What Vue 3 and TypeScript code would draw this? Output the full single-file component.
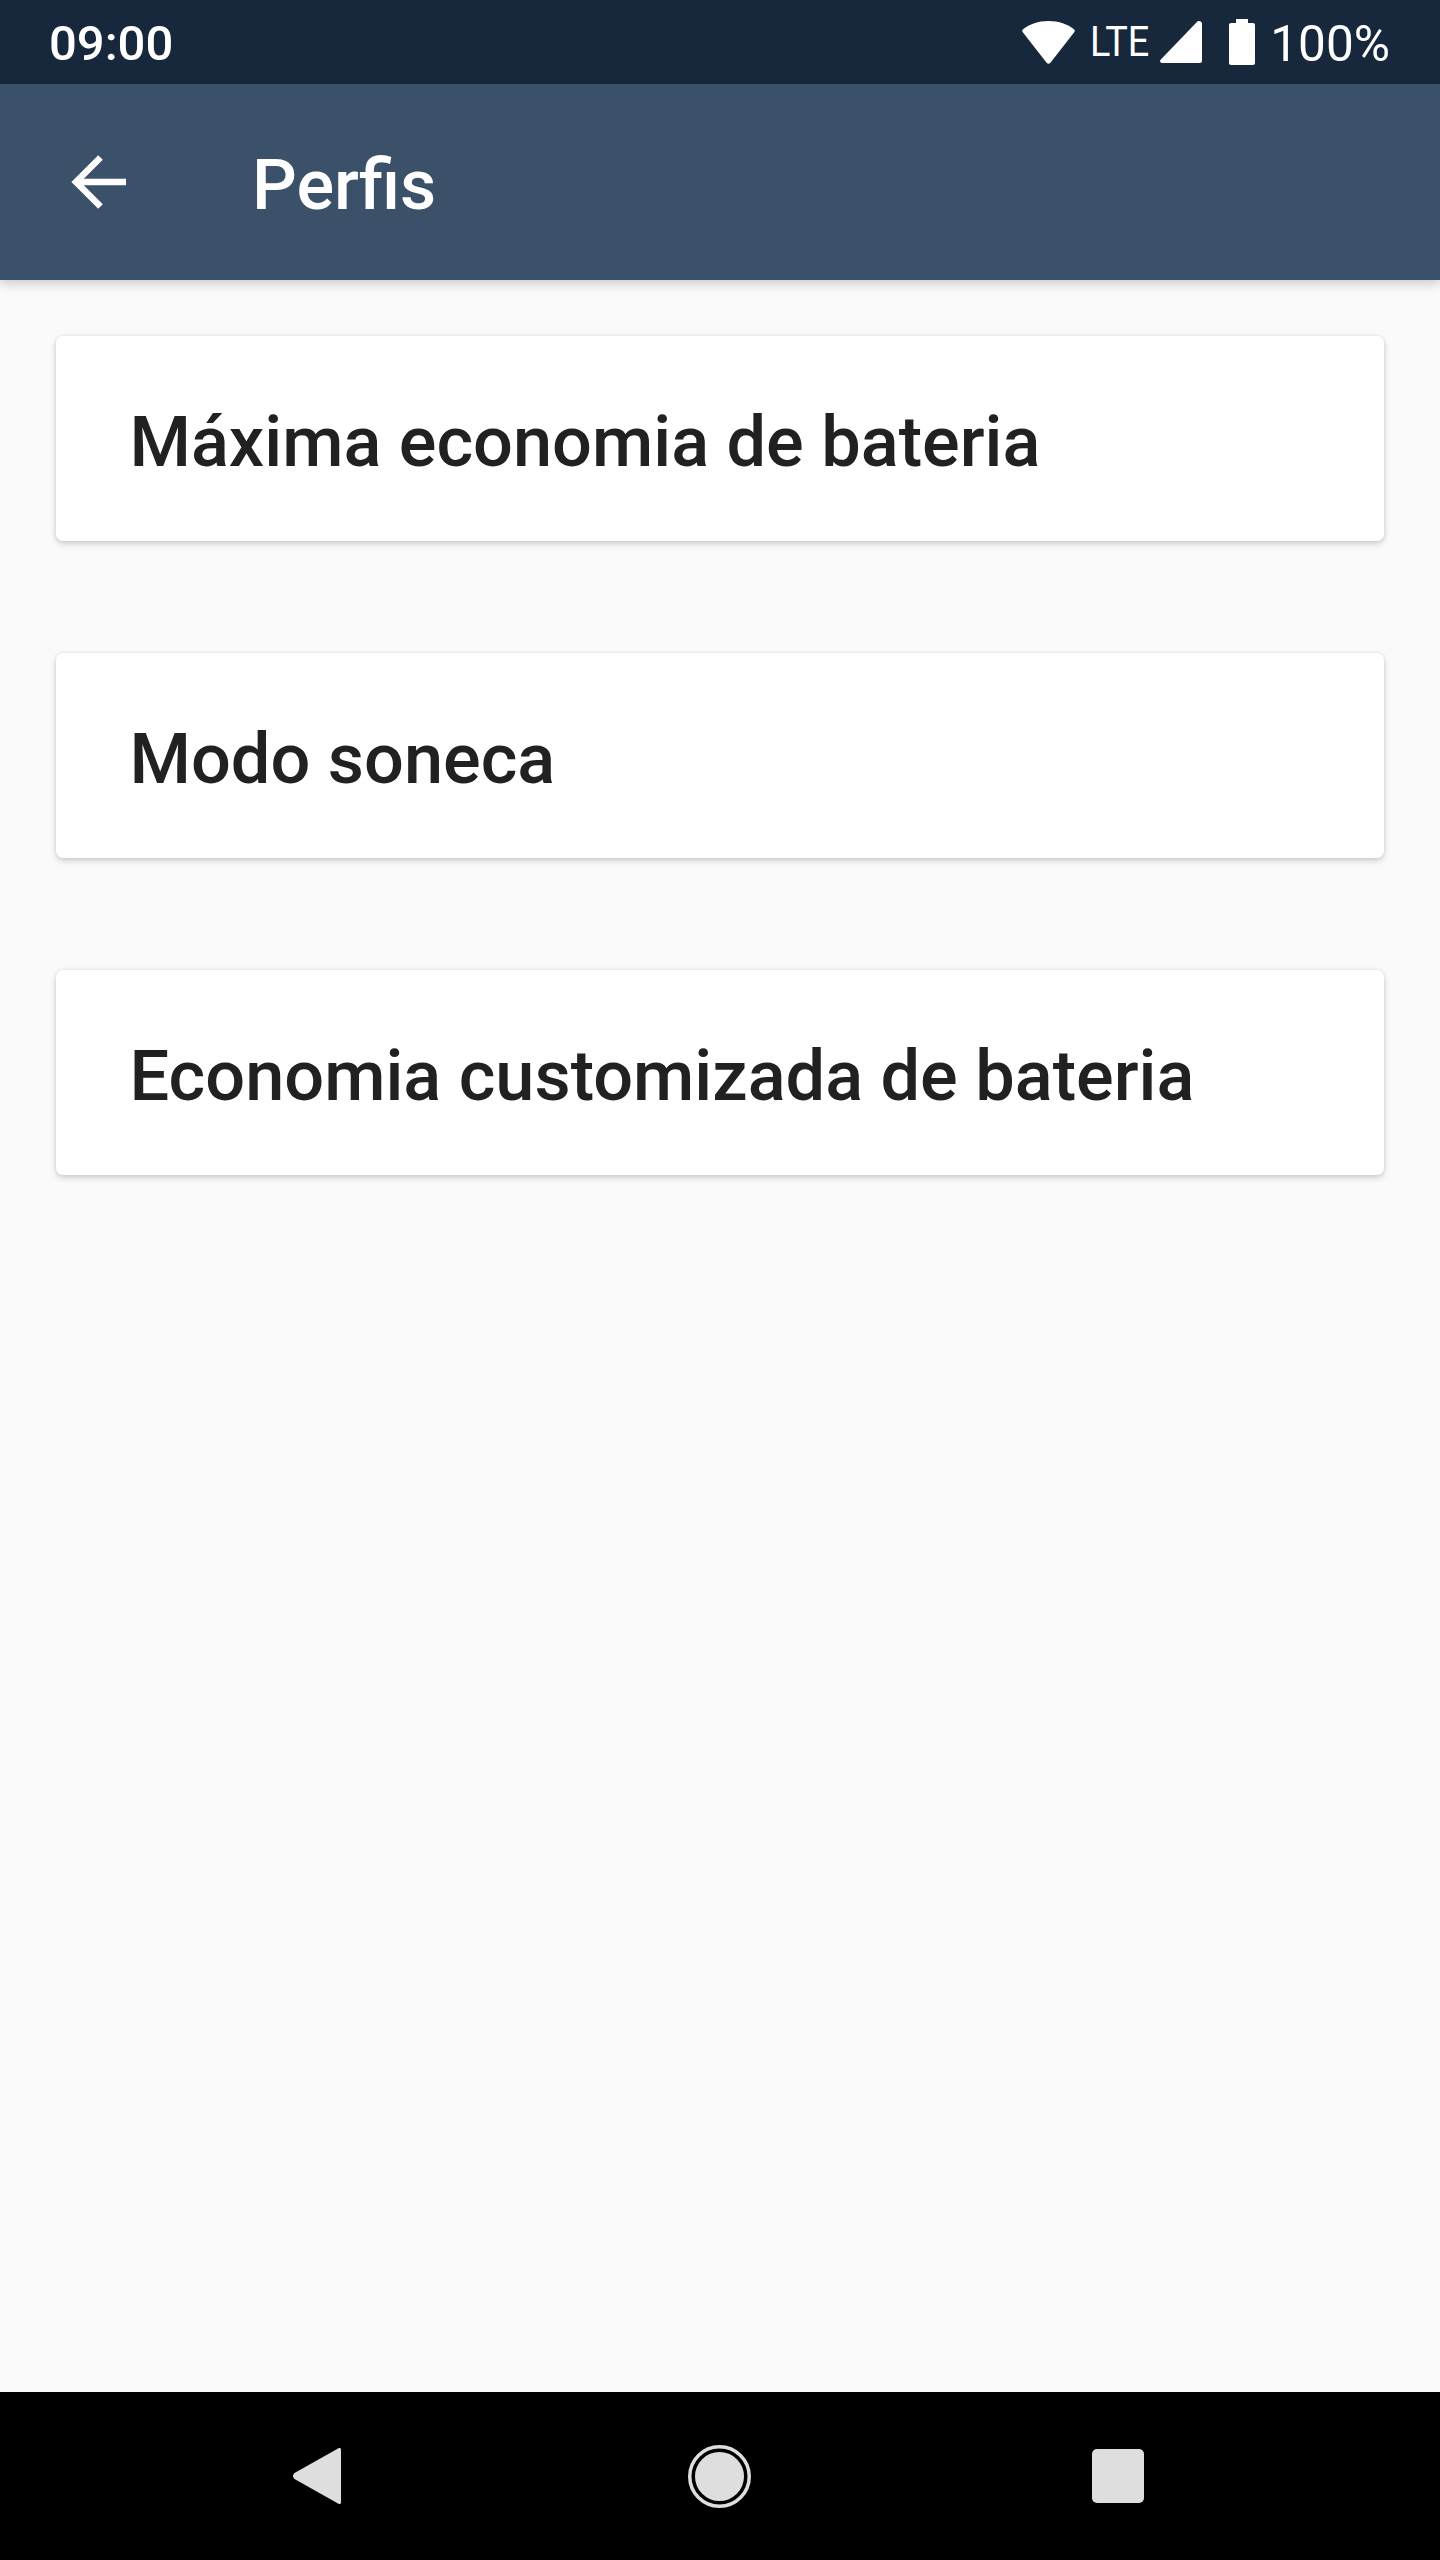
<template>
  <div class="screen">
    <div class="status-bar">
      <span class="time">09:00</span>
      <div class="status-icons">
        <svg class="wifi" width="53" height="43" viewBox="0 0 53 43">
          <path d="M26.500 0C16 0 7.500 3.200 1 8.200c-.9.7-1.100 1.900-.4 2.800l24 30.800c1 1.200 2.800 1.200 3.800 0l24-30.800c.7-.9.5-2.100-.4-2.800C45.500 3.200 37 0 26.500 0z" fill="#fff" />
        </svg>
        <span class="lte">LTE</span>
        <svg class="signal" width="42" height="42" viewBox="0 0 42 42">
          <path d="M39 0c1.700 0 3 1.300 3 3v37c0 1.100-.9 2-2 2H2c-1.800 0-2.600-2-1.400-3.300L36.900 1c.6-.6 1.300-1 2.100-1z" fill="#fff" />
        </svg>
        <svg class="battery" width="26" height="46" viewBox="0 0 26 46">
          <path d="M7 0h12v4h5c1.100 0 2 .9 2 2v38c0 1.100-.9 2-2 2H2c-1.100 0-2-.9-2-2V6c0-1.100.9-2 2-2h5z" fill="#fff" />
        </svg>
        <span class="percent">100%</span>
      </div>
    </div>

    <header class="toolbar">
      <svg class="back" width="56" height="56" viewBox="0 0 56 56">
        <path d="M56 28H6M30.500 3.500 6 28l24.500 24.500" fill="none" stroke="#fff" stroke-width="6.500" />
      </svg>
      <h1>Perfis</h1>
    </header>

    <main class="content">
      <div v-for="profile in profiles" :key="profile" class="card">{{ profile }}</div>
    </main>

    <nav class="nav-bar">
      <svg class="nav-back" width="48" height="56" viewBox="0 0 48 56">
        <path d="M45 .5c1.700-1.300 3-.5 3 1.500v52c0 2-1.300 2.800-3 1.500L1.500 31c-2-1.700-2-4.300 0-6z" fill="#dedede" />
      </svg>
      <svg class="nav-home" width="63" height="63" viewBox="0 0 63 63">
        <circle cx="31.500" cy="31.500" r="29.750" fill="none" stroke="#dedede" stroke-width="3.500" />
        <circle cx="31.500" cy="31.500" r="24.500" fill="#dedede" />
      </svg>
      <div class="square"></div>
    </nav>
  </div>
</template>

<script setup lang="ts">
const profiles: string[] = [
  'Máxima economia de bateria',
  'Modo soneca',
  'Economia customizada de bateria'
]
</script>

<style scoped>
.screen {
  width: 1440px;
  height: 2560px;
  display: flex;
  flex-direction: column;
  background: #fafafa;
  font-family: Roboto, "Liberation Sans", sans-serif;
}

.status-bar {
  height: 84px;
  flex: none;
  display: flex;
  align-items: center;
  justify-content: space-between;
  padding: 0 50px 0 49px;
  background: #17283c;
  color: #fff;
}

.time {
  font-size: 49px;
  font-weight: 500;
  line-height: 80px;
  padding-top: 4px;
}

.status-icons {
  display: flex;
  align-items: center;
}

.lte {
  font-size: 42px;
  line-height: 84px;
  margin: 0 4.5px 0 14.5px;
  transform: scaleX(0.9);
  transform-origin: left center;
}

.battery {
  margin: 0 15px 0 27px;
}

.percent {
  font-size: 49.5px;
  line-height: 80px;
  padding-top: 4px;
}

.toolbar {
  height: 196px;
  flex: none;
  display: flex;
  align-items: center;
  padding-left: 70px;
  background: #3b5069;
  color: #fff;
  box-shadow: 0 4px 10px rgba(0, 0, 0, 0.18);
  position: relative;
}

.toolbar h1 {
  margin: 0 0 0 126px;
  padding-top: 5px;
  font-size: 70.3px;
  font-weight: 500;
}

.content {
  flex: 1;
  display: flex;
  flex-direction: column;
  gap: 112px;
  padding: 56px 56px 0;
}

.card {
  height: 205px;
  box-sizing: border-box;
  display: flex;
  align-items: center;
  padding: 6px 0 0 73.5px;
  background: #fff;
  border-radius: 7px;
  box-shadow: 0 3px 6px rgba(0, 0, 0, 0.16), 0 0 4px rgba(0, 0, 0, 0.08);
  color: #212121;
  font-size: 70.3px;
  font-weight: 500;
}

.nav-bar {
  height: 168px;
  flex: none;
  display: flex;
  align-items: center;
  padding-left: 293px;
  background: #000;
}

.nav-back {
  margin-right: 347px;
}

.nav-home {
  margin-right: 341px;
}

.square {
  width: 52px;
  height: 54px;
  border-radius: 5px;
  background: #dedede;
}
</style>
